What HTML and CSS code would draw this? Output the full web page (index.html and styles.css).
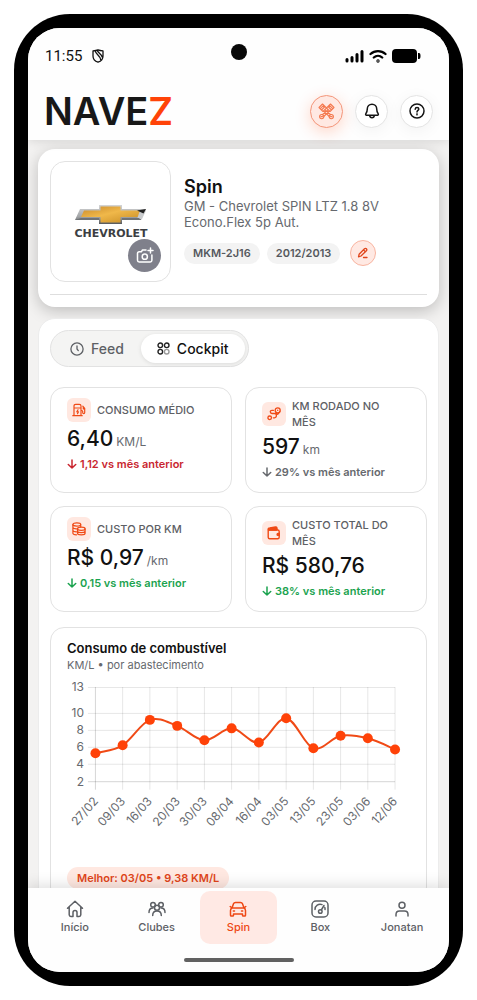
FILE: index.html
```html
<!DOCTYPE html>
<html lang="pt-BR">
<head>
<meta charset="utf-8">
<meta name="viewport" content="width=device-width, initial-scale=1">
<title>Navez</title>
<link rel="stylesheet" href="styles.css">
</head>
<body>
<div class="phone">
<div class="screen">
  <header class="top">
    <div class="status">
      <span class="clock">11:55</span>
      <svg class="shield" width="12" height="14" viewBox="0 0 12 14" fill="none" stroke="#111" stroke-width="1.300" stroke-linejoin="round"><path d="M6 .9C4.500 1.600 2.800 1.800 1 1.900v5C1 10 3.300 12.300 6 13.200 8.700 12.300 11 10 11 6.900v-5C9.200 1.800 7.500 1.600 6 .9zM3.300 2c0 3 5.500 4.800 5.500 9M5.300 1.300c.3 2.500 4.500 3.500 5 7"/></svg>
      <span class="camera"></span>
      <span class="signals">
        <svg width="19" height="14" viewBox="0 0 19 14" stroke="#000" stroke-width="3" stroke-linecap="round"><path d="M2 10.500v1.500M7 8.500v3.500M12 5.500v6.500M17 2.500v9.500"/></svg>
        <svg width="18" height="14" viewBox="0 0 18 14" fill="none" stroke="#000" stroke-width="2.300" stroke-linecap="round"><path d="M1.500 5a11 11 0 0 1 15 0M4.800 8.500a6.200 6.200 0 0 1 8.400 0"/><circle cx="9" cy="12" r=".5"/></svg>
        <svg width="29" height="14" viewBox="0 0 29 14"><rect width="25" height="14" rx="4"/><path d="M26 4h1q1.500 0 1.500 3T27 10h-1z"/></svg>
      </span>
    </div>
    <div class="brandbar">
      <a class="logo" href="#">NAVE<span>Z</span></a>
      <button class="round hot" aria-label="Garagem">
        <svg width="17" height="17" viewBox="0 0 17 17" fill="none" stroke="#f4794f" stroke-width="1.100" stroke-linejoin="round"><path d="M1 4.500 4.500 1l4 4L5 8.500zM2.300 5.700l3.500-3.500M3.500 7 7 3.500M12.500 1 16 4.500 12 8.500 8.500 5zM11.200 2.200l3.500 3.500M10 3.500 13.500 7M5.500 8l5.800 5.500M7 6.800l6 5.200M11.500 8l-5.800 5.500M10 6.800 4 12M6.800 8.500h3.400"/><circle cx="3.700" cy="13.600" r="2.100"/><circle cx="13.300" cy="13.600" r="2.100"/><path d="M2.500 13.600h2.400M12.100 13.600h2.400"/></svg>
      </button>
      <button class="round" aria-label="Notificações">
        <svg width="16" height="16" viewBox="0 0 16 16" fill="none" stroke="#151515" stroke-width="1.500" stroke-linecap="round" stroke-linejoin="round"><path d="M8 1.200c-2.700 0-4.700 2-4.700 4.600 0 3-.8 4-1.500 5-.4.700-.1 1.400.7 1.400h11c.8 0 1.100-.7.7-1.400-.7-1-1.500-2-1.500-5 0-2.600-2-4.600-4.700-4.600zM5.600 12.400c.2 1.500 1.100 2.400 2.400 2.400s2.200-.9 2.400-2.400"/></svg>
      </button>
      <button class="round" aria-label="Ajuda">
        <svg width="16" height="16" viewBox="0 0 16 16" fill="none" stroke="#151515" stroke-width="1.500" stroke-linecap="round"><circle cx="8" cy="8" r="7"/><path d="M6.200 6.200C6.300 5 7 4.500 8 4.500s1.800.6 1.800 1.600C9.800 7.400 8 7.500 8 9"/><circle cx="8" cy="11.400" r=".3"/></svg>
      </button>
    </div>
  </header>

  <main class="content">
    <section class="card vehicle">
      <div class="vehicle-row">
        <div class="photo">
          <svg width="76" height="44" viewBox="0 0 76 44" role="img" aria-label="Chevrolet">
            <defs><linearGradient id="gold" x1="0" x2="1" y1="0" y2="1"><stop offset="0" stop-color="#c8892b"/><stop offset=".45" stop-color="#f0b84a"/><stop offset="1" stop-color="#c58a22"/></linearGradient><linearGradient id="chrome" x1="0" y1="0" x2="0" y2="1"><stop offset="0" stop-color="#d4d5d6"/><stop offset=".6" stop-color="#a5a7a9"/><stop offset="1" stop-color="#55585b"/></linearGradient></defs>
            <g transform="translate(1 -1)">
            <path d="M6 5h19V1h23v4h24l-5 11H48v4H25v-4H1z" fill="url(#chrome)"/>
            <path d="M10 6.500h16.500v-4h20v4H68l-3.500 6.500h-18v5.500h-20V13H7z" fill="url(#gold)"/>
            <path d="M66 6.500h6l-4 8.500h-5z" fill="#c9cbcd"/>
            <path d="M1 16l6-2h18v2zM48 16v-2h17l2 2z" fill="#6f7275"/>
            <path d="M63 6.500 72 5l-2.500 4.500z" fill="#222"/>
            </g>
            <text x="38" y="32" text-anchor="middle" class="maker">CHEVROLET</text>
          </svg>
          <button class="snap" aria-label="Adicionar foto">
            <svg width="18" height="17" viewBox="0 0 18 17" fill="none" stroke="#fff" stroke-width="1.500" stroke-linecap="round" stroke-linejoin="round"><path d="M10 3H6.500L5.300 4.800H3.200q-1.700 0-1.700 1.700v6.800Q1.500 15 3.200 15h11q1.700 0 1.700-1.700V8M14.500 1v5M12 3.500h5"/><circle cx="8.800" cy="9.700" r="2.600"/></svg>
          </button>
        </div>
        <div class="facts">
          <h1>Spin</h1>
          <p>GM - Chevrolet SPIN LTZ 1.8 8V<br>Econo.Flex 5p Aut.</p>
          <div class="chips">
            <span class="chip">MKM-2J16</span>
            <span class="chip">2012/2013</span>
            <button class="edit" aria-label="Editar veículo">
              <svg width="12" height="12" viewBox="0 0 12 12" fill="none" stroke="#e0451a" stroke-width="1.300" stroke-linecap="round" stroke-linejoin="round"><path d="M7.500 1.800q1-.9 1.900 0t0 1.900L4 9l-2.500.8.600-2.500zM6.500 2.900l1.900 1.900M6.500 10.500h3.500"/></svg>
            </button>
          </div>
        </div>
      </div>
    </section>

    <section class="card dashboard">
      <div class="tabs">
        <button class="tab"><svg width="14" height="14" viewBox="0 0 14 14" fill="none" stroke="#5d6065" stroke-width="1.300" stroke-linecap="round"><circle cx="7" cy="7" r="6.100"/><path d="M7 4v3l1.300 1.600"/></svg>Feed</button>
        <button class="tab selected"><svg width="13" height="13" viewBox="0 0 13 13" fill="none" stroke="#222" stroke-width="1.400"><circle cx="3.300" cy="3.300" r="2.300"/><circle cx="9.700" cy="3.300" r="2.300"/><circle cx="3.300" cy="9.700" r="2.300"/><circle cx="9.700" cy="9.700" r="2.300" stroke="#999"/></svg>Cockpit</button>
      </div>

      <div class="tiles">
        <article class="tile">
          <div class="head"><span class="icon"><svg width="14" height="14" viewBox="0 0 14 14" fill="none" stroke="#f04a16" stroke-width="1.200" stroke-linecap="round" stroke-linejoin="round"><path d="M2 12.500V3q0-1.700 1.700-1.700h3.600Q9 1.300 9 3v9.500M.8 12.700h9.400M2 5h7M6 6.800 4.800 8.800h1.700l-1 1.900M9 7.500h.8q.9 0 .9 1v1q0 1.200 1 1.200t1-1.200V5.500L10.800 3.200M12.700 6h-1.400V4"/></svg></span><h2>CONSUMO MÉDIO</h2></div>
          <p class="value">6,40 <small>KM/L</small></p>
          <p class="trend bad"><svg class="arrow" viewBox="0 0 10 10"><path d="M5 1v8M1.300 5.500 5 9l3.700-3.500"/></svg>1,12 vs mês anterior</p>
        </article>
        <article class="tile">
          <div class="head"><span class="icon"><svg width="14" height="14" viewBox="0 0 14 14" fill="none" stroke="#f04a16" stroke-width="1.300" stroke-linecap="round" stroke-linejoin="round"><circle cx="2.700" cy="10.800" r="1.800"/><circle cx="10.700" cy="3.300" r="2.500"/><path d="M8.600 4.800 10.700 7.300 12.800 4.800M10.700 3.200v.2M6.500 3.300H5q-1.700 0-1.700 1.500T5 6.500h2.500q1.900 0 1.900 2.100T7.500 10.800H6.300"/></svg></span><h2>KM RODADO NO<br>MÊS</h2></div>
          <p class="value">597 <small>km</small></p>
          <p class="trend"><svg class="arrow" viewBox="0 0 10 10"><path d="M5 1v8M1.300 5.500 5 9l3.700-3.500"/></svg>29% vs mês anterior</p>
        </article>
        <article class="tile">
          <div class="head"><span class="icon"><svg width="14" height="14" viewBox="0 0 14 14" fill="none" stroke="#f04a16" stroke-width="1.200" stroke-linecap="round"><ellipse cx="4.800" cy="2.500" rx="3.900" ry="1.600"/><path d="M.9 2.500v8.700q0 1.400 3.600 1.600M.9 5.300Q1 6.700 4.500 6.900M.9 8.200q.1 1.400 3.600 1.600M8.700 2.500V5"/><ellipse cx="9.300" cy="6.800" rx="3.800" ry="1.600"/><path d="M5.500 6.800v4.500q0 1.600 3.800 1.600t3.800-1.600V6.800M5.500 9q0 1.600 3.800 1.600T13.100 9"/></svg></span><h2>CUSTO POR KM</h2></div>
          <p class="value">R$ 0,97 <small>/km</small></p>
          <p class="trend good"><svg class="arrow" viewBox="0 0 10 10"><path d="M5 1v8M1.300 5.500 5 9l3.700-3.500"/></svg>0,15 vs mês anterior</p>
        </article>
        <article class="tile">
          <div class="head"><span class="icon"><svg width="14" height="14" viewBox="0 0 14 14" fill="none" stroke="#f04a16" stroke-width="1.400" stroke-linecap="round" stroke-linejoin="round"><path d="M1.200 3.500v7.700q0 1.500 1.500 1.500h8q1.500 0 1.500-1.500V5.500q0-1.500-1.500-1.500H2.500Q1.200 4 1.200 3T2.700 1.900L8.500 1q1.500 0 1.500 1.500V4"/><path d="M1.500 3 9.500 1.500V4h-8z" fill="#f04a16"/><path d="M12.300 7.500h-1.300a.9.900 0 0 0 0 1.800h1.300z" fill="#f04a16"/></svg></span><h2>CUSTO TOTAL DO<br>MÊS</h2></div>
          <p class="value">R$ 580,76</p>
          <p class="trend good"><svg class="arrow" viewBox="0 0 10 10"><path d="M5 1v8M1.300 5.500 5 9l3.700-3.500"/></svg>38% vs mês anterior</p>
        </article>
      </div>

      <article class="chart">
        <h2>Consumo de combustível</h2>
        <p>KM/L • por abastecimento</p>
        <svg class="plot" viewBox="0 0 344 170" role="img" aria-label="Consumo por abastecimento">
          <path class="grid" d="M21 7.500H329M21 33.500H329M21 50.500H329M21 67.500H329M21 84.500H329M55.800 7v103M83.100 7v103M110.500 7v103M137.800 7v103M165.100 7v103M192.400 7v103M219.800 7v103M247.100 7v103M274.400 7v103M301.700 7v103M329 7v103"/>
          <path class="axis" d="M28.500 7v103M21 102H329"/>
          <g class="ylab"><text x="17" y="11">13</text><text x="17" y="37">10</text><text x="17" y="54">8</text><text x="17" y="71">6</text><text x="17" y="88">4</text><text x="17" y="106">2</text></g>
          <path class="line" d="M28.500 73.500C38 71 46.500 71.200 55.800 65.500S73.800 43.300 83.100 40s18 2.500 27.400 6 18 14.100 27.300 14.500 18-12.100 27.300-12 18 15.900 27.300 14.200S210.500 37.300 219.800 38.300s18 27.200 27.300 30.200S265.100 57.700 274.400 56s18 .2 27.300 2.500 18 7 27.300 11.200"/>
          <g class="dots"><circle cx="28.500" cy="73.500" r="5"/><circle cx="55.800" cy="65.500" r="5"/><circle cx="83.100" cy="40" r="5"/><circle cx="110.500" cy="46" r="5"/><circle cx="137.800" cy="60.500" r="5"/><circle cx="165.100" cy="48.500" r="5"/><circle cx="192.400" cy="62.700" r="5"/><circle cx="219.800" cy="38.300" r="5"/><circle cx="247.100" cy="68.500" r="5"/><circle cx="274.400" cy="56" r="5"/><circle cx="301.700" cy="58.500" r="5"/><circle cx="329" cy="69.700" r="5"/></g>
          <g class="xlab">
            <text transform="translate(32 122) rotate(-48)">27/02</text><text transform="translate(59 122) rotate(-48)">09/03</text><text transform="translate(86 122) rotate(-48)">16/03</text><text transform="translate(114 122) rotate(-48)">20/03</text><text transform="translate(141 122) rotate(-48)">30/03</text><text transform="translate(168 122) rotate(-48)">08/04</text><text transform="translate(196 122) rotate(-48)">16/04</text><text transform="translate(223 122) rotate(-48)">03/05</text><text transform="translate(250 122) rotate(-48)">13/05</text><text transform="translate(278 122) rotate(-48)">23/05</text><text transform="translate(305 122) rotate(-48)">03/06</text><text transform="translate(332 122) rotate(-48)">12/06</text>
          </g>
        </svg>
        <span class="best">Melhor: 03/05 • 9,38 KM/L</span>
      </article>
    </section>
  </main>

  <nav class="nav">
    <div class="nav-items">
      <a href="#"><svg viewBox="0 0 18 18"><path d="M1.500 8.300 9 1.300l7.500 7M3.200 7v7.800q0 1.700 1.700 1.700H7v-4q0-2 2-2t2 2v4h2.100q1.700 0 1.700-1.700V7"/></svg>Início</a>
      <a href="#"><svg viewBox="0 0 18 18"><circle cx="5" cy="4.800" r="2.300"/><circle cx="13" cy="4.800" r="2.300"/><circle cx="9" cy="7.700" r="2.500"/><path d="M1 12.500c0-2.700 1.300-4.500 4-4.500M17 12.500c0-2.700-1.300-4.500-4-4.500M4.700 15.500c0-2.800 1.700-4.500 4.300-4.500s4.300 1.700 4.300 4.500"/></svg>Clubes</a>
      <a href="#" class="active" aria-current="page"><svg viewBox="0 0 18 18"><path d="M3 8l1.500-4.200q.5-1.300 2-1.300h5q1.500 0 2 1.300L15 8M1.200 6.500 3 8h12l1.800-1.500M3 8q-1.500.7-1.500 2.500v4.700q0 .8.800.8h1.400q.8 0 .8-.8V14h9v1.200q0 .8.800.8h1.400q.8 0 .8-.8v-4.700Q16.500 8.700 15 8M4.300 11h1.200M12.500 11h1.200"/></svg>Spin</a>
      <a href="#"><svg viewBox="0 0 18 18"><rect x="1" y="1" width="16" height="16" rx="4"/><path d="M4 9.500A5.200 5.200 0 0 1 11 4.600M13.800 7.500q.4 1 .2 2M10.300 10 13 5.500"/><circle cx="9.300" cy="11.500" r="1.800"/></svg>Box</a>
      <a href="#"><svg viewBox="0 0 18 18"><circle cx="9" cy="5.200" r="3"/><path d="M3 16v-1.500q0-3.500 3.500-3.500h5q3.500 0 3.500 3.500V16"/></svg>Jonatan</a>
    </div>
    <div class="home-bar"></div>
  </nav>
</div>
</div>
</body>
</html>
```
FILE: styles.css
```css
* { box-sizing: border-box; }
body { margin: 0; padding: 14px; background: #fff; font-family: Inter, "Liberation Sans", sans-serif; color: #111; }
h1, h2, p { margin: 0; }
button { font: inherit; color: inherit; border: 0; padding: 0; background: none; }
a { color: inherit; text-decoration: none; }
svg { display: block; flex: none; }

.phone { height: calc(100vh - 28px); padding: 14px; background: #000; border-radius: 56px; }
.screen { height: 100%; display: flex; flex-direction: column; overflow: hidden; border-radius: 32px; background: #f3f2f1; }

.top { position: relative; background: #fefefe; padding: 0 16px 1px; box-shadow: 0 1px 10px rgba(0, 0, 0, .12); }
.status { position: relative; display: flex; align-items: center; gap: 10px; height: 55px; padding-left: 1px; }
.clock { font: 15px/18px Roboto, sans-serif; }
.camera { position: absolute; left: 50%; top: 16px; width: 16px; height: 16px; margin-left: -8px; border-radius: 50%; background: #080808; }
.signals { display: flex; gap: 5px; margin-left: auto; padding-right: 12px; }
.brandbar { display: flex; align-items: center; gap: 12px; height: 56px; }
.logo { margin-right: auto; font-size: 38px; line-height: 44px; font-weight: 600; color: #181818; }
.logo span { color: #ff4308; }
.round { display: grid; place-items: center; width: 33px; height: 33px; border: 1px solid #e4e4e4; border-radius: 50%; background: #fff; box-shadow: 0 3px 16px rgba(0, 0, 0, .05); }
.round.hot { background: #ffe9e3; border-color: #f4967a; box-shadow: 0 4px 16px rgba(255, 68, 10, .22); }

.content { flex: 1; min-height: 0; overflow: hidden; padding: 9px 10px 0; display: flex; flex-direction: column; gap: 11px; }
.card { flex: none; background: #fff; border-radius: 17px; padding: 12px; }
.vehicle { box-shadow: 0 4px 16px rgba(0, 0, 0, .22); }
.vehicle-row { display: flex; gap: 13px; padding-bottom: 12px; border-bottom: 1px solid #dedede; }
.photo { position: relative; display: grid; place-items: center; flex: none; width: 121px; height: 121px; border: 1px solid #e2e2e2; border-radius: 15px; padding-top: 10px; }
.maker { font: bold 11px "DejaVu Sans", sans-serif; fill: #3c3e42; }
.snap { position: absolute; right: 9px; bottom: 9px; display: grid; place-items: center; width: 33px; height: 33px; border-radius: 50%; background: #7f808b; }
.facts { flex: 1; min-width: 0; padding-top: 15px; }
.facts h1 { font-size: 18px; line-height: 22px; font-weight: 600; }
.facts p { font-size: 13px; line-height: 16px; color: #66696e; }
.chips { display: flex; align-items: center; gap: 7px; margin-top: 10px; }
.chip { padding: 0 9px; border-radius: 11px; background: #f3f3f3; font-size: 11px; line-height: 21px; font-weight: 600; color: #55585d; }
.edit { display: grid; place-items: center; width: 26px; height: 26px; margin-left: 3px; border: 1px solid #f8b4a0; border-radius: 50%; background: #ffe9e3; }

.dashboard { border: 1px solid #ececec; padding: 11px; }
.tabs { display: flex; width: fit-content; padding: 3px; border: 1px solid #e2e2e2; border-radius: 19px; background: #f4f4f3; }
.tab { display: flex; align-items: center; gap: 7px; height: 29px; padding: 0 17px 0 16px; border-radius: 15px; font-size: 14px; font-weight: 500; color: #5d6065; }
.tab.selected { background: #fff; color: #111; box-shadow: 0 1px 4px rgba(0, 0, 0, .1); }

.tiles { display: grid; grid-template-columns: 1fr 1fr; gap: 13px; margin-top: 20px; }
.tile { min-height: 106px; padding: 10px 16px; border: 1px solid #e2e2e2; border-radius: 14px; }
.head { display: flex; align-items: center; gap: 6px; }
.icon { display: grid; place-items: center; flex: none; width: 24px; height: 24px; border-radius: 6px; background: #ffe8e1; }
.head h2 { font-size: 11px; line-height: 16px; font-weight: 500; color: #5d6065; }
.value { display: flex; align-items: baseline; gap: 3px; height: 30px; margin-top: 2px; font-size: 21px; line-height: 30px; font-weight: 500; white-space: nowrap; }
.value small { font-size: 12px; line-height: 16px; font-weight: 400; color: #66696e; }
.trend { display: flex; align-items: center; gap: 3px; margin-top: 2px; font-size: 11px; line-height: 16px; font-weight: 600; color: #66696e; white-space: nowrap; }
.arrow { width: 10px; height: 10px; fill: none; stroke: currentColor; stroke-width: 1.5; stroke-linecap: round; stroke-linejoin: round; }
.trend.bad { color: #c9262f; }
.trend.good { color: #1ba34f; }

.chart { margin-top: 15px; padding: 11px 16px; border: 1px solid #e2e2e2; border-radius: 14px; }
.chart h2 { font-size: 13px; line-height: 18px; font-weight: 600; }
.chart p { font-size: 11px; line-height: 16px; color: #66696e; }
.plot { width: 100%; margin-top: 7px; }
.grid { fill: none; stroke: #000; stroke-opacity: .1; }
.axis { fill: none; stroke: #000; stroke-opacity: .17; }
.line { fill: none; stroke: #f04a16; stroke-width: 2; }
.dots { fill: #ff4208; }
.ylab, .xlab { font: 12px Inter, sans-serif; fill: #66696e; text-anchor: end; }
.best { display: inline-block; margin-top: 17px; padding: 0 10px; border-radius: 11px; background: #ffe8e1; font-size: 11px; line-height: 22px; font-weight: 600; color: #e0451a; }

.nav { position: relative; padding: 3px 8px 10px; background: #fefefe; box-shadow: 0 -2px 14px rgba(0, 0, 0, .14); }
.nav-items { display: grid; grid-template-columns: repeat(5, 1fr); gap: 4px; }
.nav a { display: flex; flex-direction: column; align-items: center; gap: 2px; height: 53px; padding-top: 9px; border-radius: 10px; font-size: 11px; line-height: 14px; font-weight: 500; color: #5d6065; }
.nav svg { width: 18px; height: 18px; fill: none; stroke: currentColor; stroke-width: 1.5; stroke-linecap: round; stroke-linejoin: round; }
.nav a.active { background: #ffe9e4; color: #ee4815; }
.home-bar { width: 110px; height: 4px; margin: 14px auto 0; border-radius: 2px; background: #616161; }
```
